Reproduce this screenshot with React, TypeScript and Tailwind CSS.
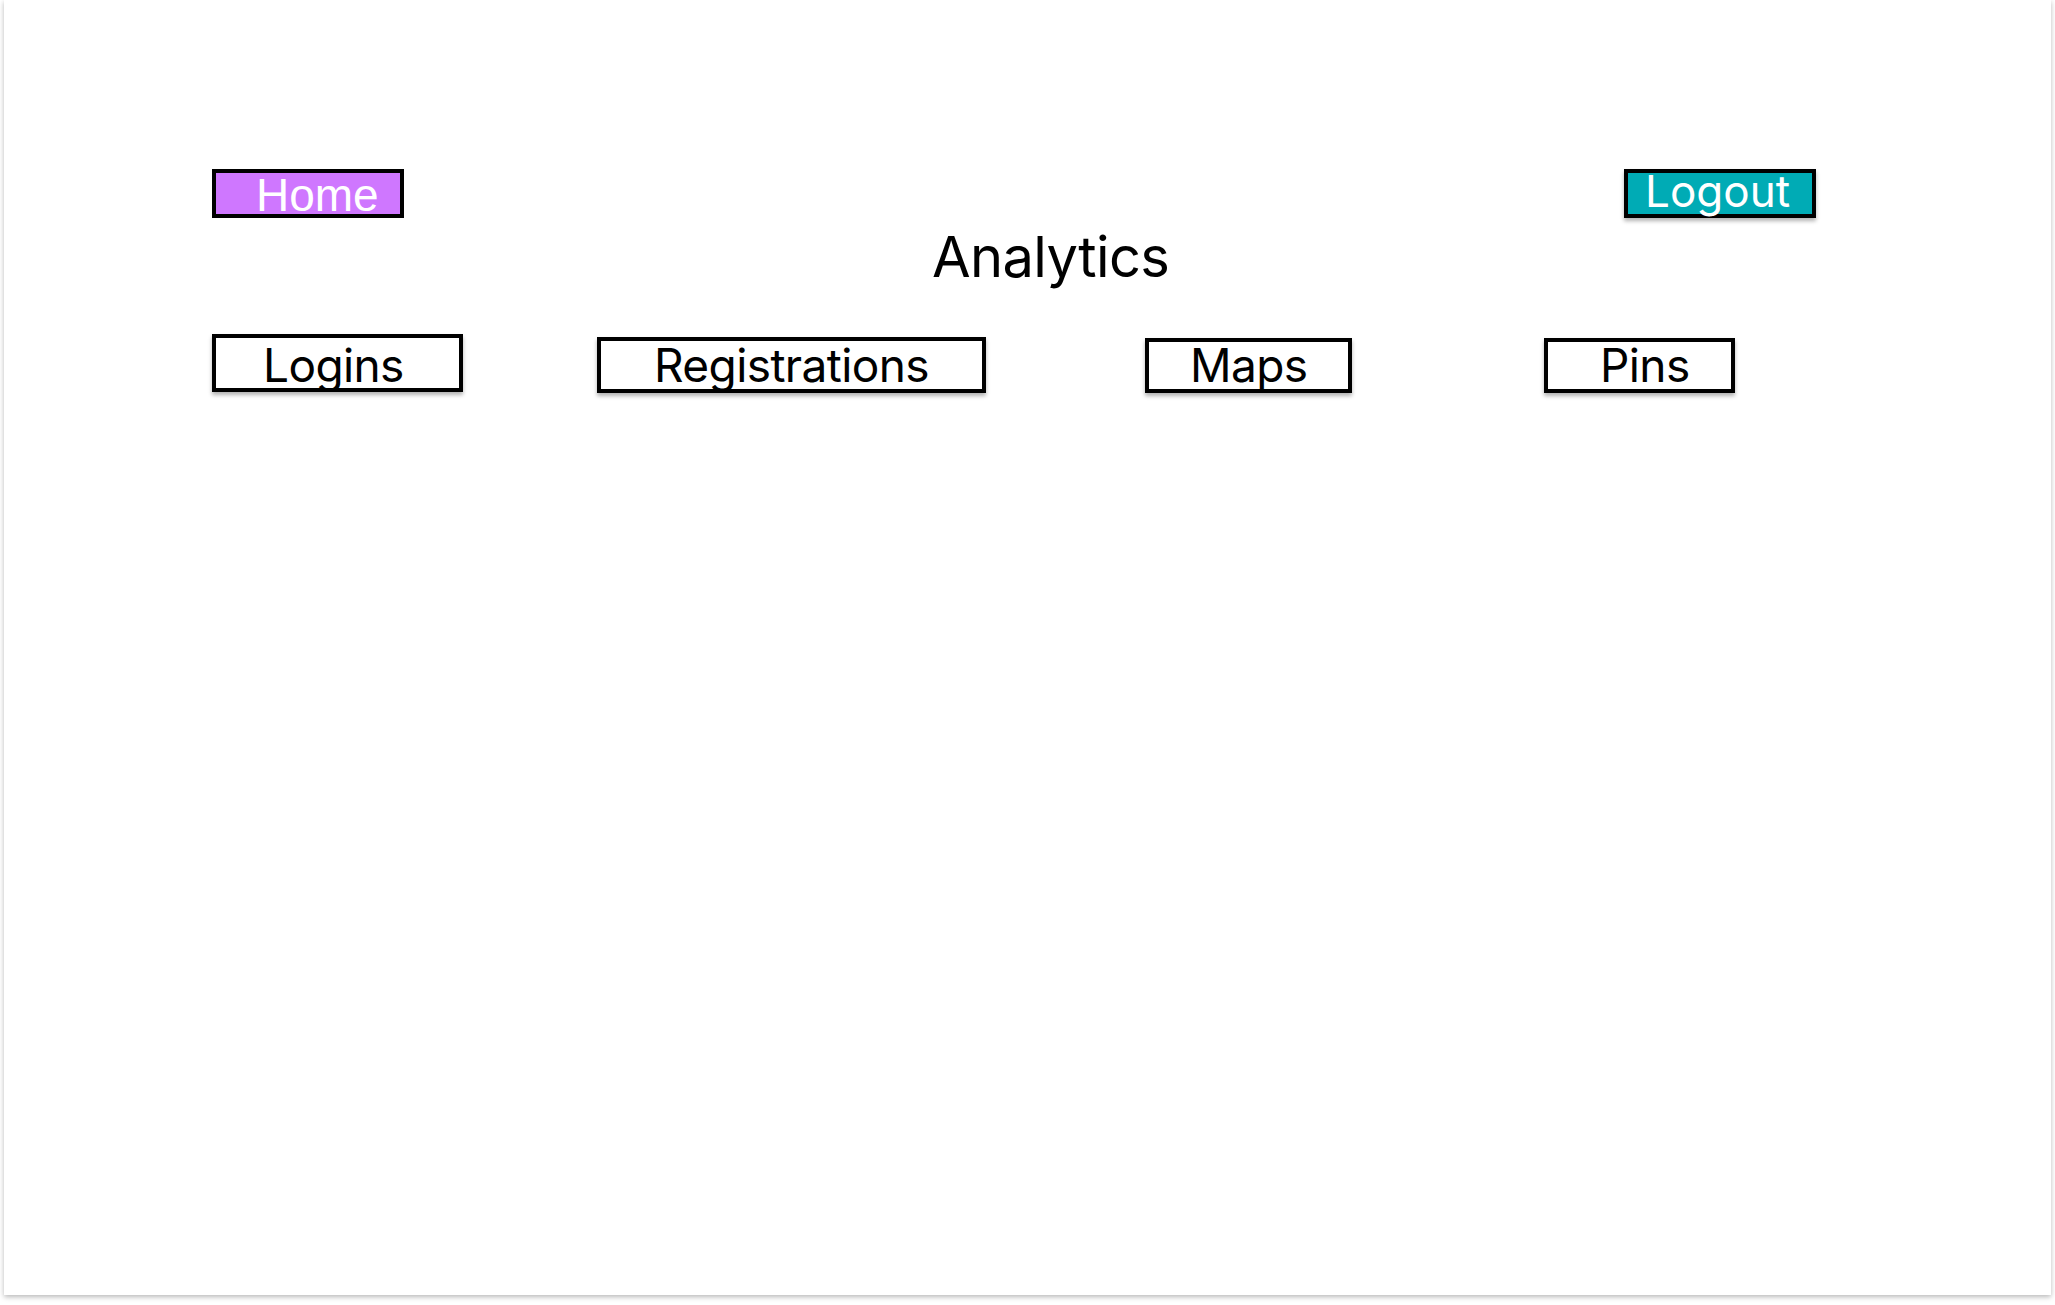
import type { JSX } from 'react';

const inter = { fontFamily: 'Inter, "Noto Sans", sans-serif' };

function NavBox({ label, className }: { label: string; className: string }): JSX.Element {
  return (
    <div
      className={`flex shrink-0 items-start border-4 border-black bg-white shadow-[0_3px_4px_rgba(0,0,0,0.3)] ${className}`}
    >
      <span className="text-[46px] leading-none tracking-[-0.6px] text-black" style={inter}>
        {label}
      </span>
    </div>
  );
}

export default function App(): JSX.Element {
  return (
    <div className="min-h-screen w-full bg-white px-[4px]">
      <div className="h-[1295px] w-full bg-white shadow-[0_2px_5px_rgba(0,0,0,0.28)]">
        <div className="flex flex-col pl-[208px] pt-[169px]">
          <div className="flex w-[1604px] items-start justify-between">
            <div className="flex h-[49px] w-[192px] items-start border-4 border-black bg-[#cf77ff] pl-[40px]">
              <span
                className="text-[46px] leading-[45px] text-white"
                style={{ fontFamily: '"Liberation Sans", Arial, sans-serif' }}
              >
                Home
              </span>
            </div>
            <div className="flex h-[49px] w-[192px] items-start border-4 border-black bg-[#00abb5] pl-[17px] shadow-[0_3px_4px_rgba(0,0,0,0.3)]">
              <span className="text-[44px] leading-[36px] text-white" style={inter}>
                Logout
              </span>
            </div>
          </div>

          <h1
            className="ml-[720px] mt-[11px] text-[56px] leading-none font-normal tracking-[-0.6px] text-black"
            style={inter}
          >
            Analytics
          </h1>

          <div className="mt-[49px] flex items-start">
            <NavBox label="Logins" className="h-[58px] w-[251px] pl-[47px] pt-[4px]" />
            <NavBox label="Registrations" className="ml-[134px] mt-[3px] h-[56px] w-[389px] pl-[53px] pt-[1px]" />
            <NavBox label="Maps" className="ml-[159px] mt-[4px] h-[55px] w-[207px] pl-[41px]" />
            <NavBox label="Pins" className="ml-[192px] mt-[4px] h-[55px] w-[191px] pl-[52px]" />
          </div>
        </div>
      </div>
    </div>
  );
}
